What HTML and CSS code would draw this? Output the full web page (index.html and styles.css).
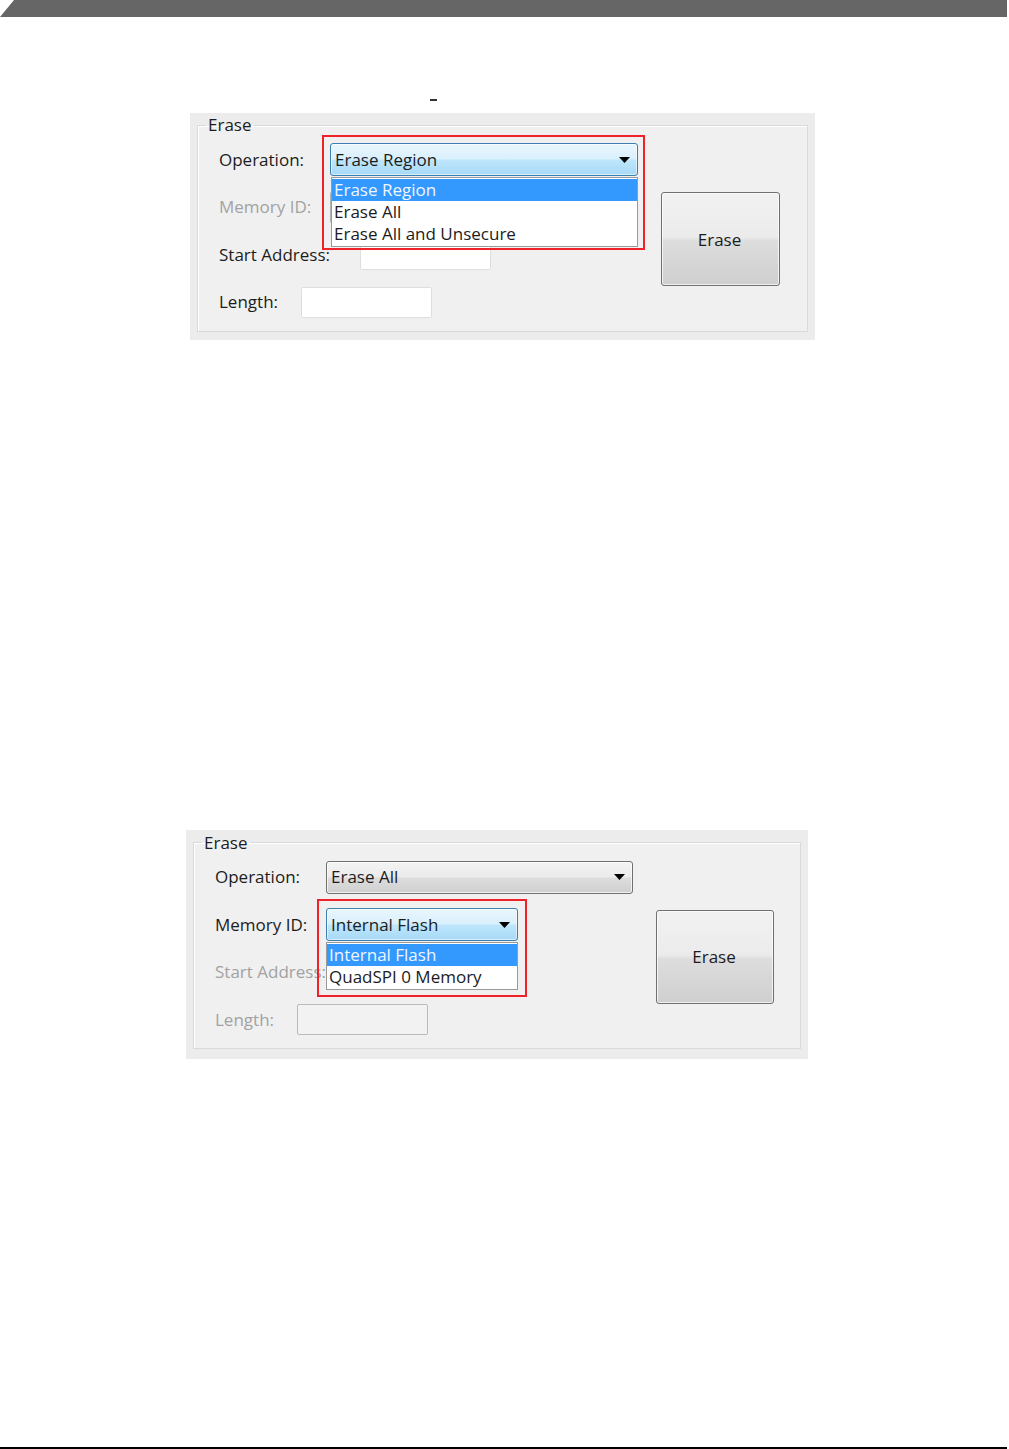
FILE: index.html
```html
<!DOCTYPE html>
<html lang="en">
<head>
<meta charset="utf-8">
<title>Erase</title>
<link rel="stylesheet" href="styles.css">
</head>
<body>
<div class="topbar"></div>

<div class="mark"></div>

<section class="panel panel--one">
  <fieldset class="group">
    <legend class="legend">Erase</legend>
    <div class="group-body">
      <div class="fields">
        <div class="row row--combo">
          <span class="lbl">Operation:</span>
          <div class="combo-wrap combo-wrap--wide">
            <div class="combo combo--focus">
              <span class="combo-text">Erase Region</span>
              <svg class="arrow" width="11" height="6" viewBox="0 0 11 6"><polygon points="0,0 11,0 5.5,6" fill="#000"/></svg>
            </div>
            <ul class="list list--wide">
              <li class="item item--sel">Erase Region</li>
              <li class="item">Erase All</li>
              <li class="item">Erase All and Unsecure</li>
            </ul>
            <div class="callout callout--one"></div>
          </div>
        </div>
        <div class="row row--combo">
          <span class="lbl lbl--dis">Memory ID:</span>
          <div class="combo combo--dis combo--narrow"></div>
        </div>
        <div class="row row--start">
          <span class="lbl">Start Address:</span>
          <div class="tbox"></div>
        </div>
        <div class="row row--len">
          <span class="lbl">Length:</span>
          <div class="tbox"></div>
        </div>
      </div>
      <button class="btn" type="button">Erase</button>
    </div>
  </fieldset>
</section>

<section class="panel panel--two">
  <fieldset class="group">
    <legend class="legend">Erase</legend>
    <div class="group-body">
      <div class="fields fields--two">
        <div class="row row--combo">
          <span class="lbl">Operation:</span>
          <div class="combo combo--gray combo--wide2">
            <span class="combo-text">Erase All</span>
            <svg class="arrow" width="11" height="6" viewBox="0 0 11 6"><polygon points="0,0 11,0 5.5,6" fill="#000"/></svg>
          </div>
        </div>
        <div class="row row--combo">
          <span class="lbl">Memory ID:</span>
          <div class="combo-wrap combo-wrap--narrow">
            <div class="combo combo--focus">
              <span class="combo-text">Internal Flash</span>
              <svg class="arrow" width="11" height="6" viewBox="0 0 11 6"><polygon points="0,0 11,0 5.5,6" fill="#000"/></svg>
            </div>
            <ul class="list list--narrow">
              <li class="item item--sel">Internal Flash</li>
              <li class="item">QuadSPI 0 Memory</li>
            </ul>
            <div class="callout callout--two"></div>
          </div>
        </div>
        <div class="row row--start">
          <span class="lbl lbl--dis">Start Address:</span>
          <div class="tbox tbox--dis"></div>
        </div>
        <div class="row row--len">
          <span class="lbl lbl--dis">Length:</span>
          <div class="tbox tbox--dis"></div>
        </div>
      </div>
      <button class="btn btn--two" type="button">Erase</button>
    </div>
  </fieldset>
</section>

<div class="footline"></div>
</body>
</html>
```
FILE: styles.css
```css
* { box-sizing: border-box; }

body {
  margin: 0;
  background: #ffffff;
  font-family: "Open Sans", "Liberation Sans", sans-serif;
  font-size: 17px;
  color: #1c1c1c;
}

.topbar {
  width: 1007px;
  height: 17px;
  background: #666666;
  clip-path: polygon(14px 0, 100% 0, 100% 100%, 0 100%);
}

.mark {
  width: 7px;
  height: 2px;
  margin: 82px 0 0 430px;
  background: #333333;
}

.panel {
  background: #ececec;
  padding: 2px 7px 8px 7px;
}

.panel--one {
  width: 625px;
  margin: 12px 0 0 190px;
}

.panel--two {
  width: 622px;
  margin: 490px 0 0 186px;
  padding-top: 3px;
  padding-bottom: 10px;
}

.group {
  margin: 0;
  padding: 8px 0 12px 21px;
  border: 1px solid #d6dadc;
  box-shadow: inset 1px 1px 0 #ffffff;
  background: #f0f0f0;
  min-width: 0;
}

.legend {
  padding: 0 2px;
  margin-left: -13px;
  line-height: 20px;
  height: 20px;
  color: #1c1c1c;
}

.group-body {
  display: flex;
  align-items: flex-start;
}

.fields {
  width: 442px;
  display: flex;
  flex-direction: column;
  gap: 14.5px;
}

.fields--two { width: 441px; }

.row {
  display: grid;
  align-items: center;
  height: 33px;
}

.row--combo { grid-template-columns: 111px auto; }
.row--start { grid-template-columns: 141px auto; }
.row--len { grid-template-columns: 82px auto; }

.lbl {
  white-space: nowrap;
  line-height: 20px;
  color: #1c1c1c;
}

.lbl--dis { color: #a2a2a2; }

.combo-wrap {
  position: relative;
  height: 33px;
}

.combo-wrap--wide { width: 308px; }
.combo-wrap--narrow { width: 192px; }

.combo {
  height: 33px;
  border: 1px solid #707070;
  border-radius: 3px;
  display: flex;
  align-items: center;
  justify-content: space-between;
  padding: 0 7px 0 4px;
  width: 100%;
}

.combo--wide2 { width: 307px; }
.combo--narrow { width: 192px; }

.combo--focus {
  border-color: #3c7fb1;
  background: linear-gradient(to bottom, #eaf6fd 0%, #d9f0fc 48%, #bee6fd 52%, #a7d9f5 100%);
  box-shadow: inset 0 0 0 1px rgba(255,255,255,0.55);
}

.combo--gray {
  background: linear-gradient(to bottom, #f4f4f4 0%, #ebebeb 48%, #dddddd 52%, #cfcfcf 100%);
  box-shadow: inset 0 0 0 1px rgba(255,255,255,0.7);
}

.combo--dis {
  border-color: #adb2b5;
  background: #f4f4f4;
}

.combo-text {
  white-space: nowrap;
  line-height: 20px;
  color: #1c1c1c;
}

.arrow { flex: none; }

.list {
  position: absolute;
  margin: 0;
  padding: 1px 0;
  list-style: none;
  background: #ffffff;
  border: 1px solid #9a9a9a;
  z-index: 2;
}

.list--wide {
  top: 34px;
  left: 1px;
  width: 307px;
}

.list--narrow {
  top: 34px;
  left: 0;
  width: 192px;
}

.item {
  height: 22px;
  line-height: 22px;
  padding-left: 2px;
  white-space: nowrap;
  color: #1c1c1c;
}

.item--sel {
  background: #3399ff;
  color: #eef6ff;
}

.callout {
  position: absolute;
  border: 2px solid #ee2228;
  z-index: 3;
}

.callout--one {
  left: -8px;
  top: -8px;
  width: 323px;
  height: 115px;
}

.callout--two {
  left: -9px;
  top: -9px;
  width: 210px;
  height: 98px;
}

.tbox {
  width: 131px;
  height: 31px;
  background: #ffffff;
  border: 1px solid #dcdfe2;
  border-radius: 2px;
}

.tbox--dis {
  background: #f2f2f2;
  border-color: #b9bcbf;
}

.btn {
  margin-top: 49px;
  width: 119px;
  height: 94px;
  border: 1px solid #707070;
  border-radius: 3px;
  background: linear-gradient(to bottom, #f2f2f2 0%, #ebebeb 48%, #dddddd 52%, #cfcfcf 100%);
  box-shadow: inset 0 0 0 1px rgba(255,255,255,0.7);
  font-family: "Open Sans", "Liberation Sans", sans-serif;
  font-size: 17px;
  color: #1c1c1c;
  padding: 0 2px 0 0;
}

.btn--two { width: 118px; }

.footline {
  width: 1007px;
  height: 2px;
  margin-top: 388px;
  background: #000000;
}
```
